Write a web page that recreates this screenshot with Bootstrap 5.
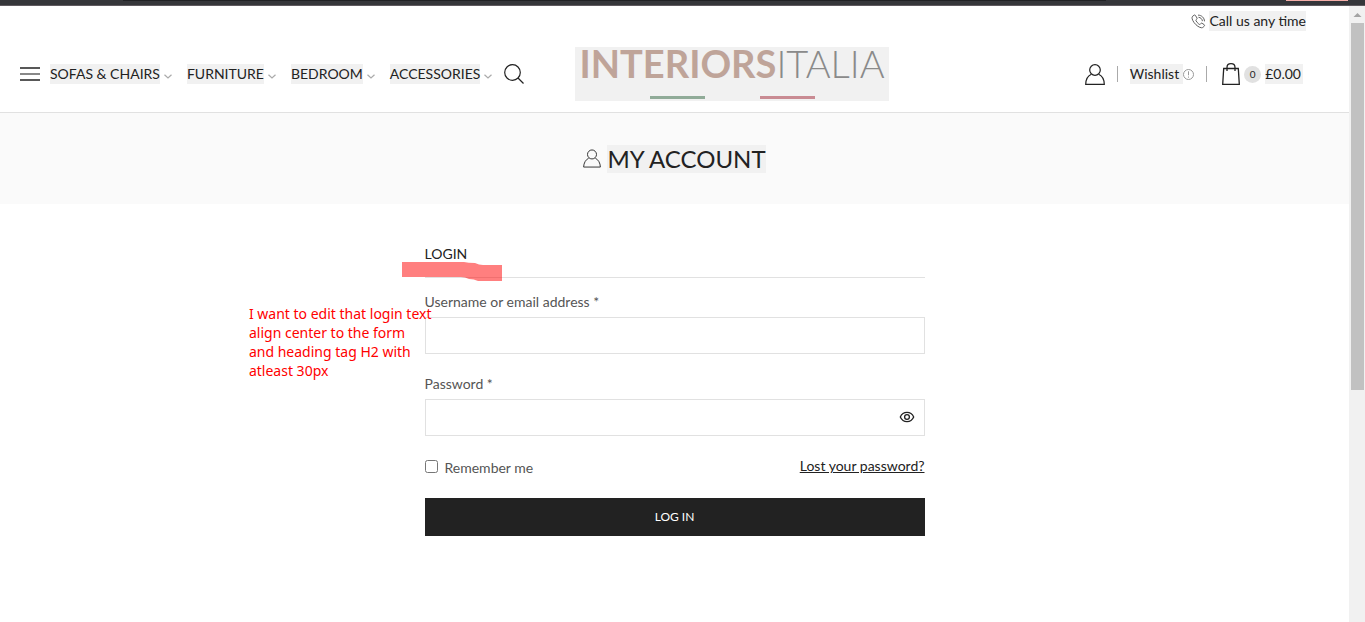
<!DOCTYPE html>
<html lang="en">
<head>
<meta charset="utf-8">
<meta name="viewport" content="width=device-width, initial-scale=1">
<title>My account – Interiors Italia</title>
<link href="https://cdn.jsdelivr.net/npm/bootstrap@5.3.0/dist/css/bootstrap.min.css" rel="stylesheet">
<style>
  body { font: 14px/20px Lato, "Liberation Sans", sans-serif; color: #222; background: #fff; overflow: hidden; }
  a { color: #222; text-decoration: none; }
  .window-edge { height: 6px; background: #35363a; border-bottom: 1px solid #5f5a5f; }
  .window-edge i { height: 1px; }
  .edge-dark { width: 72%; margin-left: 9%; background: #202124; }
  .edge-red { width: 62px; margin-right: 17px; background: #f6aea9; }
  .hl { background: #f1f1f1; }
  .site-header { border-bottom: 1px solid #e1e1e1; }
  .call-bar { padding: 5px 43px 0 0; gap: 3px; }
  .main-bar { padding: 16px 0 11px; }
  .main-menu { padding-left: 20px; gap: 10px; }
  .menu-items { gap: 15px; margin-right: 2px; }
  .menu-items a { gap: 4px; }
  .plain { border: 0; background: none; padding: 0; line-height: 0; }
  .logo-cell { padding-left: 13px; }
  .logo { width: 314px; height: 54px; color: #bfa499; font-size: 38px; line-height: 32px; }
  .logo b { font-weight: 700; }
  .logo span { font-weight: 300; color: #8a8a8a; }
  .flag { gap: 55px; margin-top: 17px; }
  .flag i { width: 55px; height: 3px; background: #90ab98; }
  .flag i + i { background: #c98b93; }
  .tools { padding-right: 46px; }
  .rule { width: 1px; height: 16px; background: #aaa; margin: 0 12px; }
  .cart { gap: 4px; margin-left: 3px; }
  .price { padding-right: 2px; }
  .count { width: 17px; height: 17px; font-size: 10px; line-height: 17px; background: #e1e1e1; }
  .page-title { background: #fafafa; height: 91px; gap: 6px; }
  .page-title h1 { font-size: 24px; line-height: 28px; }
  .login { width: 500px; max-width: 100%; margin-top: 34px; color: #555; }
  .login h2 { font-size: 14px; line-height: 20px; color: #222; padding: 6px 0 13px; border-bottom: 1px solid #e1e1e1; margin-bottom: 14px; }
  .login label { display: block; }
  .login .form-control { height: 37px; border-color: #e1e1e1; border-radius: 0; }
  .gap-label { margin-bottom: 5px; }
  .field { margin-bottom: 20px; }
  .eye { right: 10px; top: 10px; }
  .login input[type=checkbox] { width: 13px; height: 13px; margin: 0 7px 3px 0; }
  .remember { margin-top: 2px; }
  .submit { height: 38px; background: #222; color: #fff; border: 0; border-radius: 0; font-size: 12px; margin-top: 20px; }
  .marker { left: -23px; top: 24px; }
  .note { right: 100%; top: 66px; margin: 0 -7px 0 0; font: 14px/19px "Noto Sans", sans-serif; color: #f00; white-space: nowrap; }
  .scroll { width: 16px; background: #f1f1f1; padding: 0 1px 0 2px; }
  .scroll svg { display: block; height: 17px; width: 13px; }
  .thumb { height: 367px; max-height: 60%; background: #c1c1c1; }
</style>
</head>
<body class="vh-100 d-flex flex-column">
<div class="window-edge d-flex justify-content-between"><i class="edge-dark"></i><i class="edge-red"></i></div>
<div class="d-flex flex-grow-1">
  <div class="flex-grow-1">
    <header class="site-header">
      <div class="call-bar d-flex justify-content-end align-items-center">
        <svg width="15" height="15" viewBox="0 0 16 16" fill="none" stroke="#555" stroke-width="1"><path d="M3.4 1.2 1.7 2.4C.6 3.6 1 6 3.3 9.200c2.400 3.200 5.600 5.300 8 5.500 1.300 0 2.300-1 3-2.100.3-.5.1-1-.3-1.300l-2.200-1.400c-.5-.3-1-.2-1.300.2l-.7.9c-.4.3-1 .1-1.600-.4C7 9.600 6 8.400 5.400 7.300c-.3-.6-.3-1 .1-1.300l.7-.6c.4-.3.4-.7.2-1.100L4.700 1.500c-.3-.5-.8-.6-1.300-.3zM7.500 1.200c3.800 0 6.700 2.800 6.900 6.600M8 3.500c2.300.2 3.900 1.800 4.200 4.100"/></svg>
        <a href="#" class="hl">Call us any time</a>
      </div>
      <div class="main-bar row g-0 align-items-center">
        <div class="col-5">
          <nav class="main-menu d-flex align-items-center" aria-label="Main">
            <button class="plain" aria-label="Menu"><svg width="20" height="14" viewBox="0 0 20 14"><path d="M0 1h20M0 13h20" stroke="#222" stroke-width="1.300"/><path d="M0 7h20" stroke="#888" stroke-width="2"/></svg></button>
            <div class="menu-items d-flex">
              <a href="#" class="d-flex align-items-center"><span class="hl">SOFAS &amp; CHAIRS</span><svg class="mt-1" width="8" height="5" viewBox="0 0 8 5" fill="none" stroke="#aaa" stroke-width="1.200"><path d="M.5.7 4 4 7.500.7"/></svg></a>
              <a href="#" class="d-flex align-items-center"><span class="hl">FURNITURE</span><svg class="mt-1" width="8" height="5" viewBox="0 0 8 5" fill="none" stroke="#aaa" stroke-width="1.200"><path d="M.5.7 4 4 7.500.7"/></svg></a>
              <a href="#" class="d-flex align-items-center"><span class="hl">BEDROOM</span><svg class="mt-1" width="8" height="5" viewBox="0 0 8 5" fill="none" stroke="#aaa" stroke-width="1.200"><path d="M.5.7 4 4 7.500.7"/></svg></a>
              <a href="#" class="d-flex align-items-center"><span class="hl">ACCESSORIES</span><svg class="mt-1" width="8" height="5" viewBox="0 0 8 5" fill="none" stroke="#aaa" stroke-width="1.200"><path d="M.5.7 4 4 7.500.7"/></svg></a>
            </div>
            <button class="plain" aria-label="Search"><svg width="20" height="20" viewBox="0 0 20 20" fill="none" stroke="#222" stroke-width="1.200"><circle cx="8.500" cy="8.500" r="7.800"/><path d="m14 14 5.500 5.500"/></svg></button>
          </nav>
        </div>
        <div class="logo-cell col-4">
          <a href="#" class="logo hl d-block text-center" aria-label="Interiors Italia">
            <b>INTERIORS</b><span>ITALIA</span>
            <div class="flag d-flex justify-content-center"><i></i><i></i></div>
          </a>
        </div>
        <div class="col-3">
          <div class="tools d-flex justify-content-end align-items-center">
            <a href="#" class="plain" aria-label="Account"><svg width="20" height="21" viewBox="0 0 20 21" fill="none" stroke="#222" stroke-width="1.200"><circle cx="10" cy="6" r="5.300"/><path d="M6.300 10.200C3 11.700.8 15.500.7 20.300h18.600c-.1-4.800-2.300-8.600-5.600-10.100"/></svg></a>
            <span class="rule"></span>
            <a href="#" class="d-flex align-items-center"><span class="hl pe-1">Wishlist</span><svg width="11" height="11" viewBox="0 0 11 11" fill="none" stroke="#999"><circle cx="5.500" cy="5.500" r="5"/><path d="M5.500 2.300v4M5.500 7.500v1.200"/></svg></a>
            <span class="rule"></span>
            <a href="#" class="cart d-flex align-items-center"><svg width="18" height="22" viewBox="0 0 18 22" fill="none" stroke="#222" stroke-width="1.300"><path d="M1.700 5.500h14.600l1 15.800H.7zM5 8V4.500C5 2.200 6.700.7 9 .7s4 1.500 4 3.800V8"/></svg><span class="count rounded-circle text-center">0</span><span class="price hl">£0.00</span></a>
          </div>
        </div>
      </div>
    </header>
    <div class="page-title d-flex justify-content-center align-items-center">
      <svg width="18" height="19" viewBox="0 0 20 21" fill="none" stroke="#222" stroke-width="1"><circle cx="10" cy="6" r="5"/><path d="M6.300 10.200C3 11.700.8 15.500.7 20h18.600c-.1-4.500-2.300-8.300-5.600-9.800"/></svg>
      <h1 class="hl m-0 fw-normal">MY ACCOUNT</h1>
    </div>
    <form class="login mx-auto position-relative">
      <h2 class="fw-normal">LOGIN</h2>
      <svg class="marker position-absolute" width="101" height="20" viewBox="0 0 101 20"><path d="M0 0h62q4 1 11 1 4 2 8 2h19v16H76q-4-2-9-2-4-2-8-2H0z" fill="#f00" fill-opacity=".5"/></svg>
      <p class="note position-absolute">I want to edit that login text<br>align center to the form<br>and heading tag H2 with<br>atleast 30px</p>
      <div class="field">
        <label class="gap-label" for="user">Username or email address *</label>
        <input class="form-control shadow-none" id="user" type="text">
      </div>
      <div class="field">
        <label class="gap-label" for="pass">Password *</label>
        <div class="position-relative">
          <input class="form-control shadow-none" id="pass" type="password">
          <button type="button" class="plain eye position-absolute" aria-label="Show password"><svg width="16" height="16" viewBox="0 0 16 16" fill="none" stroke="#222" stroke-width="1.300"><path d="M1.300 8C4 1.900 12 1.900 14.700 8 12 14.100 4 14.100 1.300 8z"/><circle cx="8" cy="8" r="2.400"/></svg></button>
        </div>
      </div>
      <div class="d-flex justify-content-between">
        <label class="remember d-flex align-items-center"><input type="checkbox">Remember me</label>
        <a href="#" class="text-decoration-underline">Lost your password?</a>
      </div>
      <button type="submit" class="submit btn w-100">LOG IN</button>
    </form>
  </div>
  <div class="scroll" aria-hidden="true">
    <svg viewBox="0 0 13 17"><path d="m2.500 11 4-4 4 4z" fill="#a3a3a3"/></svg>
    <div class="thumb"></div>
  </div>
</div>
<script src="https://cdn.jsdelivr.net/npm/bootstrap@5.3.0/dist/js/bootstrap.bundle.min.js"></script>
</body>
</html>
